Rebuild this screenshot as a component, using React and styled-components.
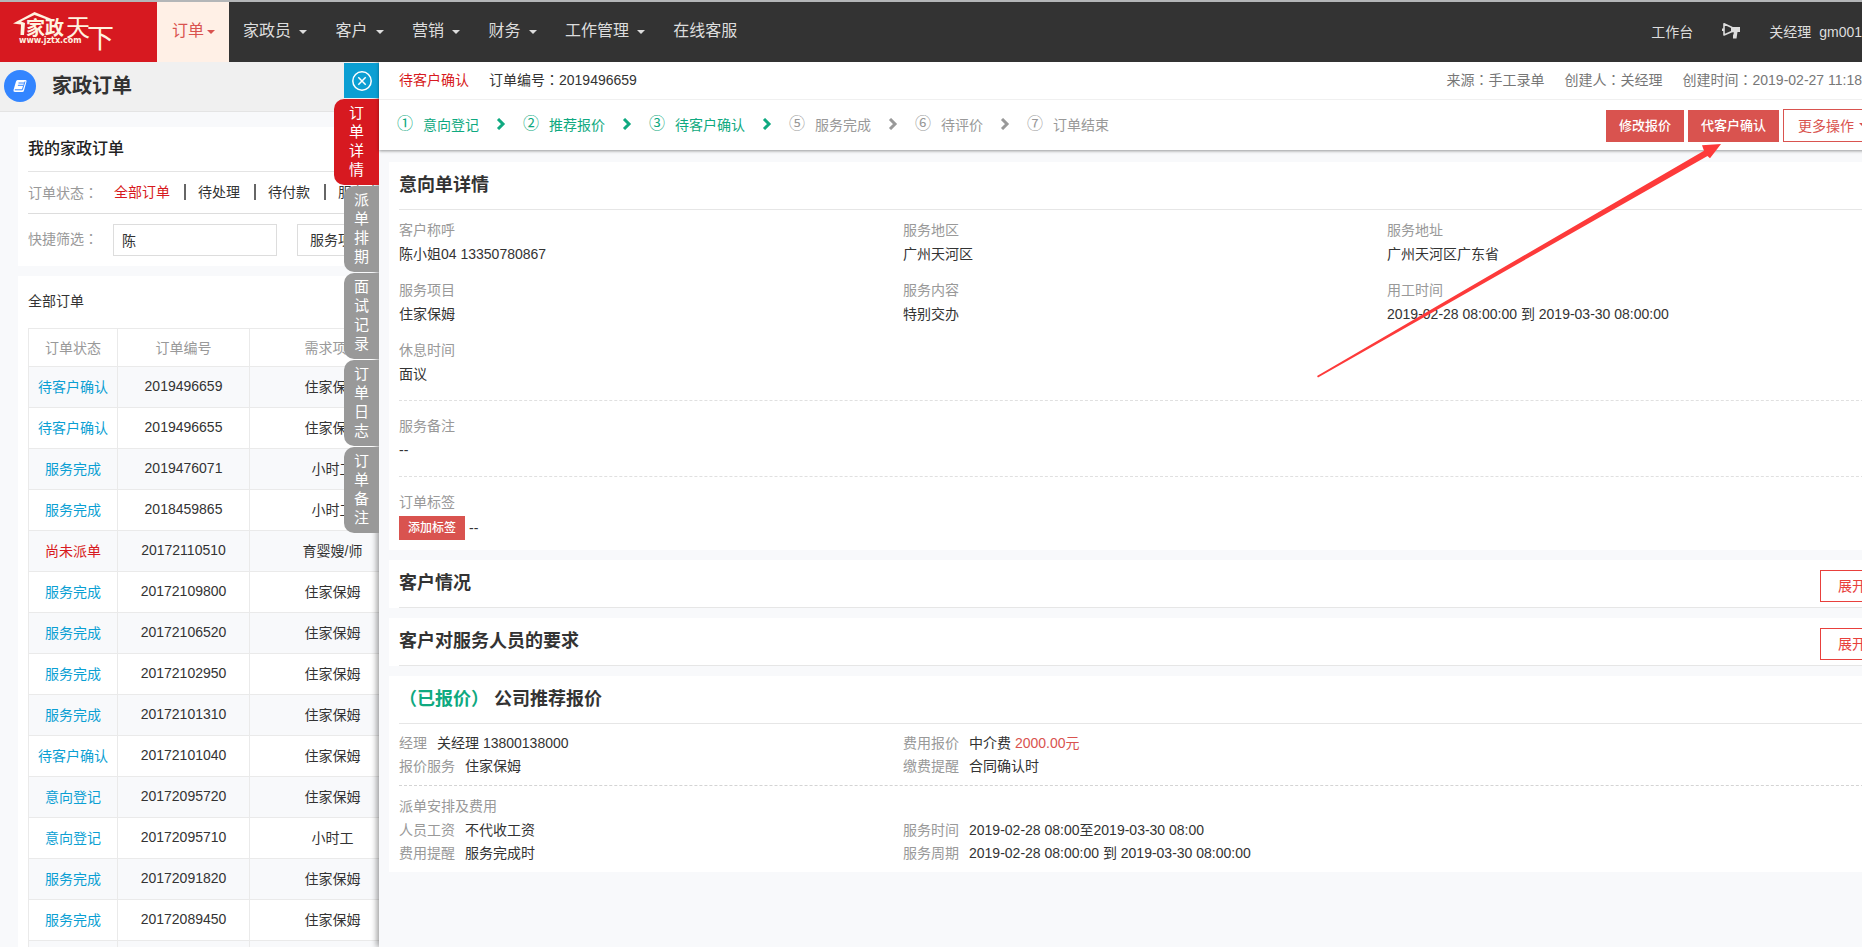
import React from "react";
import styled, { createGlobalStyle, css } from "styled-components";

const GlobalStyle = createGlobalStyle`
  *, *::before, *::after { box-sizing: border-box; }
  body {
    margin: 0;
    font-family: "Liberation Sans", "Noto Sans CJK SC", sans-serif;
    font-size: 14px;
    color: #333;
    background: #f8f9fb;
  }
  a { color: inherit; text-decoration: none; }
  button, input, select { font: inherit; margin: 0; }
  h1, h2, h3, p, dl, dt, dd, ol { margin: 0; padding: 0; list-style: none; }
`;

const App = styled.div`
  height: 100vh;
  display: flex;
  flex-direction: column;
  overflow: hidden;
`;

/* ---------- top bar ---------- */

const TopBar = styled.header`
  display: flex;
  flex: none;
  height: 62px;
  border-top: 2px solid #b4b6b8;
  background: #333;
  color: #ddd;
`;

const LogoLink = styled.a`
  flex: none;
  width: 157px;
  background: #d71920;
`;

const Nav = styled.nav`
  display: flex;
  flex: 1;
  font-size: 16px;
  line-height: 58px;
`;

const Caret = styled.span`
  display: inline-block;
  vertical-align: middle;
  border: 4px solid transparent;
  border-top-color: currentColor;
  border-bottom: 0;
`;

const NavItem = styled.a`
  padding: 0 14px;
  white-space: nowrap;
  ${Caret} { margin-left: 4px; }
  ${(p) => p.$active && css`
    padding-left: 15px;
    background: #fff0e6;
    color: #d9534f;
    ${Caret} { margin-left: 3px; }
  `}
`;

const UserArea = styled.div`
  display: flex;
  align-items: center;
  gap: 28px;
  padding-bottom: 2px;
  white-space: nowrap;
`;

const UserLink = styled.a`
  display: flex;
  align-items: baseline;
  gap: 8px;
`;

/* ---------- order list behind the drawer ---------- */

const Main = styled.main`
  position: relative;
  flex: 1;
  min-height: 0;
  overflow: hidden;
`;

const TitleBar = styled.div`
  display: flex;
  align-items: center;
  gap: 16px;
  height: 50px;
  padding: 0 4px 2px;
  border-bottom: 1px solid #e4e4e4;
  background: #f0f0f0;
`;

const TitleIcon = styled.span`
  display: grid;
  place-items: center;
  width: 32px;
  height: 32px;
  border-radius: 50%;
  background: #3385ff;
`;

const PageTitle = styled.h1`
  font-size: 20px;
  line-height: 30px;
`;

const ListArea = styled.div`
  display: flex;
  flex-direction: column;
  gap: 10px;
  padding: 15px 18px;
`;

const ListCard = styled.section`
  padding: 0 10px 10px;
  background: #fff;
`;

const ListHeading = styled.h2`
  font-size: 16px;
  font-weight: 500;
  line-height: 44px;
  color: #222;
  border-bottom: 1px solid #e4e4e4;
`;

const StatusRow = styled.div`
  display: flex;
  align-items: center;
  height: 42px;
  padding-bottom: 2px;
  border-bottom: 1px solid #ddd;
`;

const RowLabel = styled.span`
  flex: none;
  width: 86px;
  color: #999;
`;

const StatusLink = styled.a`
  padding: 0 14px 0 12px;
  line-height: 16px;
  color: ${(p) => (p.$active ? "#d71920" : "#333")};
  &:first-of-type { padding-left: 0; }
  & + & { border-left: 2px solid #666; }
`;

const FilterRow = styled.div`
  display: flex;
  align-items: center;
  padding-top: 10px;
`;

const FilterLabel = styled.label`
  width: 85px;
  padding-bottom: 4px;
  color: #999;
`;

const FilterInput = styled.input`
  width: 164px;
  height: 32px;
  padding: 0 8px;
  border: 1px solid #ddd;
  color: #333;
  background: #fff;
`;

const FilterSelect = styled.select`
  width: 120px;
  height: 32px;
  margin-left: 20px;
  padding: 0 12px;
  border: 1px solid #ddd;
  appearance: none;
  color: #333;
  background: #fff;
`;

const TableTitle = styled.h2`
  padding-bottom: 2px;
  font-size: 14px;
  font-weight: 400;
  line-height: 50px;
`;

const OrderTable = styled.table`
  width: 388px;
  table-layout: fixed;
  border-collapse: collapse;
  text-align: center;
  th, td { padding: 0 0 2px; border: 1px solid #eaeaea; }
  th { height: 38px; font-weight: 400; color: #999; }
  td { height: 41px; }
  tbody tr:nth-child(odd) { background: #f8f9fb; }
`;

const OrderLink = styled.a`
  color: ${(p) => (p.$urgent ? "#d71920" : "#0b9fd3")};
`;

/* ---------- drawer ---------- */

const Drawer = styled.aside`
  position: absolute;
  top: 0;
  bottom: 0;
  left: 379px;
  right: -42px;
  background: #f8f9fb;
  box-shadow: -2px 0 6px rgba(0, 0, 0, 0.4);
`;

const TabRail = styled.div`
  position: absolute;
  top: 1px;
  right: 100%;
  display: flex;
  flex-direction: column;
  align-items: flex-end;
  gap: 1px;
`;

const CloseButton = styled.button`
  display: grid;
  place-items: center;
  width: 35px;
  height: 35px;
  padding: 0;
  border: 0;
  background: #0b9fd3;
`;

const RailTab = styled.button`
  width: ${(p) => (p.$active ? 45 : 35)}px;
  padding: 4px ${(p) => (p.$active ? 15 : 10)}px 6px;
  border: 0;
  border-radius: 10px 0 0 10px;
  background: ${(p) => (p.$active ? "#d71920" : "#999")};
  color: #fff;
  font-size: 15px;
  line-height: 19px;
  word-break: break-all;
`;

const DrawerHead = styled.header`
  position: relative;
  height: 88px;
  background: #fff;
  box-shadow: 0 1px 3px rgba(0, 0, 0, 0.4);
`;

const SummaryRow = styled.div`
  display: flex;
  align-items: center;
  gap: 20px;
  height: 38px;
  padding: 0 42px 4px 20px;
  border-bottom: 1px solid #f0f0f0;
`;

const Status = styled.span`
  color: #d71920;
`;

const MetaGroup = styled.div`
  display: flex;
  gap: 20px;
  margin-left: auto;
  color: #777;
  white-space: nowrap;
`;

const ProgressRow = styled.div`
  display: flex;
  align-items: center;
  justify-content: space-between;
  height: 50px;
  padding: 1px 22px 0 18px;
`;

const Steps = styled.ol`
  display: flex;
  align-items: center;
  gap: 17px;
  padding-bottom: 4px;
`;

const Step = styled.li`
  display: flex;
  align-items: center;
  gap: 17px;
  color: ${(p) => (p.$done ? "#0fa980" : "#999")};
`;

const StepLabel = styled.span`
  display: flex;
  align-items: center;
  gap: 10px;
`;

const StepNumber = styled.span`
  width: 16px;
  font-size: 16px;
  line-height: 20px;
`;

const Actions = styled.div`
  display: flex;
  align-items: flex-end;
  gap: 4px;
`;

const SolidButton = styled.button`
  height: ${(p) => (p.$small ? 24 : 32)}px;
  padding: 0 ${(p) => (p.$small ? 9 : 13)}px;
  border: 0;
  background: #d9534f;
  color: #fff;
  font-size: ${(p) => (p.$small ? 12 : 13)}px;
  font-weight: 500;
  line-height: 20px;
`;

const OutlineButton = styled.button`
  display: flex;
  align-items: center;
  gap: 5px;
  height: ${(p) => (p.$wide ? 32 : 33)}px;
  padding: 0 ${(p) => (p.$wide ? 17 : 14)}px 2px;
  border: 1px solid ${(p) => (p.$wide ? "#e8403c" : "#d9534f")};
  background: #fff;
  color: ${(p) => (p.$wide ? "#e8403c" : "#d9534f")};
  white-space: nowrap;
`;

const DrawerBody = styled.div`
  display: flex;
  flex-direction: column;
  gap: 10px;
  padding: 12px 10px;
`;

const Panel = styled.section`
  padding: 0 10px;
  background: #fff;
`;

const PanelHead = styled.div`
  display: flex;
  align-items: flex-start;
  justify-content: space-between;
  height: 48px;
  border-bottom: 1px solid #e6e6e6;
`;

const PanelTitle = styled.h2`
  font-size: 18px;
  line-height: 46px;
`;

const Quoted = styled.span`
  color: #0fa980;
`;

const ExpandSlot = styled.div`
  padding-top: 10px;
`;

const FieldGrid = styled.dl`
  display: grid;
  grid-template-columns: 504fr 484fr 497fr;
  row-gap: 12px;
  padding: 8px 0 14px;
`;

const NoteBlock = styled.dl`
  padding: 13px 0 ${(p) => (p.$last ? 10 : 14)}px;
  border-top: 1px dashed #e0e0e0;
`;

const FieldName = styled.dt`
  line-height: 24px;
  color: #999;
`;

const FieldValue = styled.dd`
  line-height: 24px;
`;

const TagValue = styled.dd`
  display: flex;
  align-items: center;
  gap: 4px;
  padding-top: 2px;
`;

const PairGrid = styled.dl`
  display: grid;
  grid-template-columns: 504fr 981fr;
  line-height: 23px;
`;

const Pair = styled.div`
  display: flex;
  gap: 10px;
  dt { color: #999; }
`;

const QuoteBlock = styled.div`
  padding: 8px 0 7px;
  & + & { border-top: 1px dashed #d4d4d4; }
`;

const QuoteTitle = styled.h3`
  font-size: 14px;
  font-weight: 400;
  line-height: 25px;
  color: #999;
`;

const Price = styled.span`
  color: #d9534f;
`;

/* Full-width punctuation set in the middle of its square */
const Punct = styled.span`
  font-family: "Noto Sans CJK TC", sans-serif;
  line-height: 1;
`;

const Pointer = styled.svg`
  position: absolute;
  top: 80px;
  right: 140px;
  pointer-events: none;
`;

/* ---------- drawings ---------- */

const Logo = () => (
  <svg width="157" height="60" viewBox="0 2 157 60" role="img" aria-label="家政天下">
    <path d="M13 23.500 L34.500 12 L54 20 L51 21 L34.500 15 L21 21.500 L25 23 L24 35 L20.500 35 L21 24.500 Z" fill="#fff3e0" />
    <g fill="#fff3e0" fontFamily='"Noto Sans CJK SC", sans-serif'>
      <text x="26" y="35" fontSize="19" fontWeight="700">家政</text>
      <text x="66" y="36" fontSize="24">天</text>
      <text x="87" y="48" fontSize="27">下</text>
    </g>
    <text x="19" y="43" fontSize="8" fontWeight="700" fill="#fff3e0" fontFamily='"DejaVu Sans", sans-serif'>www.jztx.com</text>
  </svg>
);

const Horn = () => (
  <svg width="20" height="18" viewBox="0 0 20 18" aria-hidden="true">
    <path d="M3 1.800 L11 5.500 V9.500 L3 13 Z" fill="none" stroke="#ddd" strokeWidth="1.600" strokeLinejoin="round" />
    <path d="M1 6.500 H3 V9 H1 Z M10 5 H19 V10 H16.500 L15.500 16.500 H12 L12 13.500 L13 10.500 L10 10 Z" fill="#ddd" />
  </svg>
);

const Book = () => (
  <svg width="14" height="14" viewBox="0 0 14 14" aria-hidden="true">
    <path d="M4.500 1 H12.500 Q14 1 13.500 2.500 L11 11.500 Q10.700 13 9.200 13 H2 Q0 13 .5 11 L3 2.500 Q3.400 1 4.500 1 Z" fill="#fff" />
    <path d="M5.500 4 H11 M4.900 6.300 H10.300 M1.800 10.800 H9.300 L12 2.500" fill="none" stroke="#3385ff" />
  </svg>
);

const CloseIcon = () => (
  <svg width="20" height="20" viewBox="0 0 20 20" fill="none" stroke="#fff" strokeWidth="1.500" aria-hidden="true">
    <circle cx="10" cy="10" r="9.200" />
    <path d="M6.300 6.300 L13.700 13.700 M13.700 6.300 L6.300 13.700" />
  </svg>
);

const Chevron = () => (
  <svg width="10" height="12" viewBox="0 0 10 12" aria-hidden="true">
    <path d="M2 1 L7 6 L2 11" fill="none" stroke="currentColor" strokeWidth="3" />
  </svg>
);

/* ---------- data ---------- */

const navItems = ["家政员", "客户", "营销", "财务", "工作管理"];
const railTabs = ["订单详情", "派单排期", "面试记录", "订单日志", "订单备注"];

const steps = [
  ["①", "意向登记", true],
  ["②", "推荐报价", true],
  ["③", "待客户确认", true],
  ["⑤", "服务完成", false],
  ["⑥", "待评价", false],
  ["⑦", "订单结束", false],
];

const orders = [
  ["待客户确认", "2019496659", "住家保姆"],
  ["待客户确认", "2019496655", "住家保姆"],
  ["服务完成", "2019476071", "小时工"],
  ["服务完成", "2018459865", "小时工"],
  ["尚未派单", "20172110510", "育婴嫂/师"],
  ["服务完成", "20172109800", "住家保姆"],
  ["服务完成", "20172106520", "住家保姆"],
  ["服务完成", "20172102950", "住家保姆"],
  ["服务完成", "20172101310", "住家保姆"],
  ["待客户确认", "20172101040", "住家保姆"],
  ["意向登记", "20172095720", "住家保姆"],
  ["意向登记", "20172095710", "小时工"],
  ["服务完成", "20172091820", "住家保姆"],
  ["服务完成", "20172089450", "住家保姆"],
];

const fields = [
  ["客户称呼", "陈小姐04 13350780867"],
  ["服务地区", "广州天河区"],
  ["服务地址", "广州天河区广东省"],
  ["服务项目", "住家保姆"],
  ["服务内容", "特别交办"],
  ["用工时间", "2019-02-28 08:00:00 到 2019-03-30 08:00:00"],
  ["休息时间", "面议"],
];

const Colon = () => <Punct>：</Punct>;

const Pairs = ({ items }) => (
  <PairGrid>
    {items.map(([name, value]) => (
      <Pair key={name}>
        <dt>{name}</dt>
        <dd>{value}</dd>
      </Pair>
    ))}
  </PairGrid>
);

const CollapsedPanel = ({ title }) => (
  <Panel>
    <PanelHead>
      <PanelTitle>{title}</PanelTitle>
      <ExpandSlot>
        <OutlineButton type="button" $wide>展开</OutlineButton>
      </ExpandSlot>
    </PanelHead>
  </Panel>
);

export default function OrderPage() {
  return (
    <App>
      <GlobalStyle />
      <TopBar>
        <LogoLink href="#"><Logo /></LogoLink>
        <Nav>
          <NavItem href="#" $active>订单<Caret /></NavItem>
          {navItems.map((name) => (
            <NavItem href="#" key={name}>{name} <Caret /></NavItem>
          ))}
          <NavItem href="#">在线客服</NavItem>
        </Nav>
        <UserArea>
          <a href="#">工作台</a>
          <Horn />
          <UserLink href="#"><span>关经理</span><span>gm001</span></UserLink>
        </UserArea>
      </TopBar>

      <Main>
        <TitleBar>
          <TitleIcon><Book /></TitleIcon>
          <PageTitle>家政订单</PageTitle>
        </TitleBar>
        <ListArea>
          <ListCard>
            <ListHeading>我的家政订单</ListHeading>
            <StatusRow>
              <RowLabel>订单状态<Colon /></RowLabel>
              <StatusLink href="#" $active>全部订单</StatusLink>
              <StatusLink href="#">待处理</StatusLink>
              <StatusLink href="#">待付款</StatusLink>
              <StatusLink href="#">服务中</StatusLink>
            </StatusRow>
            <FilterRow>
              <FilterLabel htmlFor="keyword">快捷筛选<Colon /></FilterLabel>
              <FilterInput id="keyword" defaultValue="陈" />
              <FilterSelect aria-label="服务项目">
                <option>服务项目</option>
              </FilterSelect>
            </FilterRow>
          </ListCard>
          <ListCard>
            <TableTitle>全部订单</TableTitle>
            <OrderTable>
              <colgroup>
                <col width="89" />
                <col width="132" />
                <col width="166" />
              </colgroup>
              <thead>
                <tr><th>订单状态</th><th>订单编号</th><th>需求项目</th></tr>
              </thead>
              <tbody>
                {orders.map(([status, number, service]) => (
                  <tr key={number}>
                    <td><OrderLink href="#" $urgent={status === "尚未派单"}>{status}</OrderLink></td>
                    <td>{number}</td>
                    <td>{service}</td>
                  </tr>
                ))}
                <tr><td /><td /><td /></tr>
              </tbody>
            </OrderTable>
          </ListCard>
        </ListArea>

        <Drawer>
          <TabRail>
            <CloseButton type="button" aria-label="关闭"><CloseIcon /></CloseButton>
            {railTabs.map((name, i) => (
              <RailTab type="button" key={name} $active={i === 0}>{name}</RailTab>
            ))}
          </TabRail>
          <DrawerHead>
            <SummaryRow>
              <Status>待客户确认</Status>
              <span>订单编号<Colon />2019496659</span>
              <MetaGroup>
                <span>来源<Colon />手工录单</span>
                <span>创建人<Colon />关经理</span>
                <span>创建时间<Colon />2019-02-27 11:18</span>
              </MetaGroup>
            </SummaryRow>
            <ProgressRow>
              <Steps>
                {steps.map(([number, name, done], i) => (
                  <Step key={name} $done={done}>
                    <StepLabel><StepNumber>{number}</StepNumber>{name}</StepLabel>
                    {i < steps.length - 1 && <Chevron />}
                  </Step>
                ))}
              </Steps>
              <Actions>
                <SolidButton type="button">修改报价</SolidButton>
                <SolidButton type="button">代客户确认</SolidButton>
                <OutlineButton type="button">更多操作<Caret /></OutlineButton>
              </Actions>
            </ProgressRow>
          </DrawerHead>

          <DrawerBody>
            <Panel>
              <PanelHead><PanelTitle>意向单详情</PanelTitle></PanelHead>
              <FieldGrid>
                {fields.map(([name, value]) => (
                  <div key={name}>
                    <FieldName>{name}</FieldName>
                    <FieldValue>{value}</FieldValue>
                  </div>
                ))}
              </FieldGrid>
              <NoteBlock>
                <FieldName>服务备注</FieldName>
                <FieldValue>--</FieldValue>
              </NoteBlock>
              <NoteBlock $last>
                <FieldName>订单标签</FieldName>
                <TagValue><SolidButton type="button" $small>添加标签</SolidButton>--</TagValue>
              </NoteBlock>
            </Panel>
            <CollapsedPanel title="客户情况" />
            <CollapsedPanel title="客户对服务人员的要求" />
            <Panel>
              <PanelHead>
                <PanelTitle>
                  <Quoted><Punct>（</Punct>已报价<Punct>）</Punct></Quoted> 公司推荐报价
                </PanelTitle>
              </PanelHead>
              <QuoteBlock>
                <Pairs
                  items={[
                    ["经理", "关经理 13800138000"],
                    ["费用报价", <React.Fragment key="fee">中介费 <Price>2000.00元</Price></React.Fragment>],
                    ["报价服务", "住家保姆"],
                    ["缴费提醒", "合同确认时"],
                  ]}
                />
              </QuoteBlock>
              <QuoteBlock>
                <QuoteTitle>派单安排及费用</QuoteTitle>
                <Pairs
                  items={[
                    ["人员工资", "不代收工资"],
                    ["服务时间", "2019-02-28 08:00至2019-03-30 08:00"],
                    ["费用提醒", "服务完成时"],
                    ["服务周期", "2019-02-28 08:00:00 到 2019-03-30 08:00:00"],
                  ]}
                />
              </QuoteBlock>
            </Panel>
          </DrawerBody>
        </Drawer>

        <Pointer width="408" height="238" viewBox="1314 142 408 238" aria-hidden="true">
          <path d="M1317 376 L1704 150.700 L1702 145.300 L1721 144 L1710 158.300 L1707.500 156 L1318 377.500 Z" fill="#fd3a3a" />
        </Pointer>
      </Main>
    </App>
  );
}
